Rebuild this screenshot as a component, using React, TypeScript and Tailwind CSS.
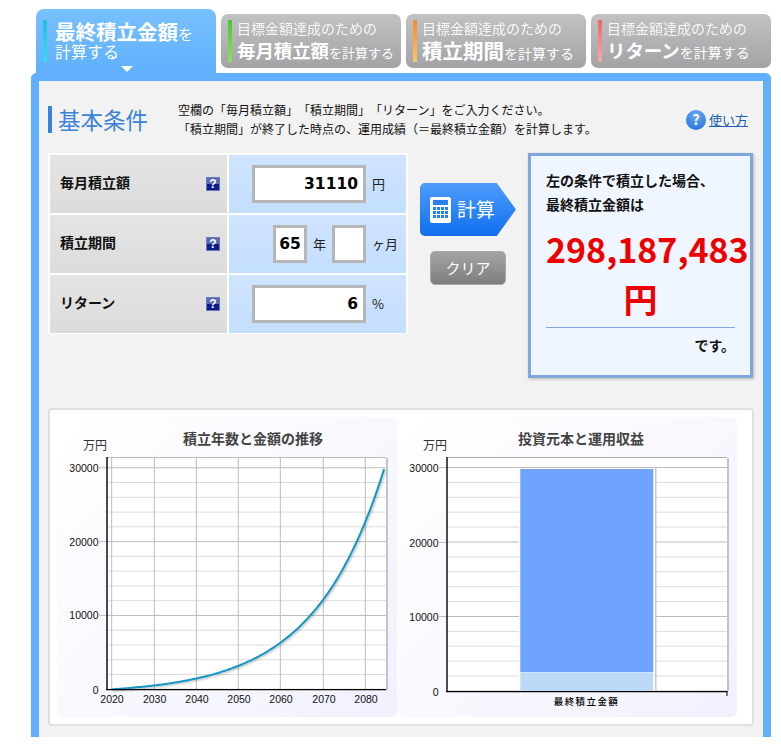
import * as React from "react";

const font = "[font-family:'Noto_Sans_CJK_JP','Noto_Sans',sans-serif] [text-spacing-trim:space-all]";

const principal = 31110;
const ticks = [0, 1, 2, 3, 4, 5, 6, 7, 8, 9, 10, 11, 12, 13, 14, 15];

function valueAt(years: number) {
  return (principal * (Math.pow(1.005, 12 * years) - 1)) / 0.005 / 10000;
}

function GrowthChart() {
  const sx = (t: number) => 54.7 + t * 4.19;
  const sy = (v: number) => 272.3 - (v / 30000) * 221.6;
  let d = "";
  for (let t = 0; t <= 65; t += 0.5) {
    d += (t === 0 ? "M" : "L") + sx(t).toFixed(1) + " " + sy(valueAt(t)).toFixed(1) + " ";
  }
  const minors = ticks.map((i) => 272.3 - i * 14.77);
  const years = [2020, 2030, 2040, 2050, 2060, 2070, 2080];
  const gridX = [54.7, 97.3, 139.3, 181.3, 223.3, 266.3, 308.3];
  const labelX = [55, 97.6, 140, 182, 224, 267, 309];
  return (
    <svg width="340" height="300" className="block">
      <defs>
        <filter id="soft" x="-5%" y="-5%" width="110%" height="110%">
          <feDropShadow dx="1" dy="1" stdDeviation="1" floodColor="#000" floodOpacity="0.3" />
        </filter>
      </defs>
      <text x="196" y="27" textAnchor="middle" fontSize="14" fontWeight="700" fill="#444">積立年数と金額の推移</text>
      <text x="26" y="33" fontSize="12" fill="#333">万円</text>
      <rect x="50" y="40" width="279" height="232" fill="#fff" />
      <rect x="329" y="41" width="2" height="232" fill="#c4c4c8" />
      {minors.map((y, i) => (
        <line key={i} x1="50" x2="329" y1={y} y2={y} stroke={i % 5 === 0 ? "#bcbcbc" : "#dcdcdc"} strokeWidth="1" />
      ))}
      {gridX.map((x) => (
        <line key={x} x1={x} x2={x} y1="40" y2="272" stroke="#bcbcbc" strokeWidth="1" />
      ))}
      <line x1="50" x2="329" y1="40.5" y2="40.5" stroke="#bbb" />
      <path d={d} fill="none" stroke="#1496c4" strokeWidth="2" filter="url(#soft)" />
      {[50.7, 124.6, 198.3].map((y) => (
        <line key={y} x1="42" x2="50" y1={y} y2={y} stroke="#bcbcbc" strokeWidth="1" />
      ))}
      <line x1="50" x2="50" y1="40" y2="273" stroke="#000" strokeWidth="1.4" />
      <line x1="49" x2="329" y1="272.6" y2="272.6" stroke="#000" strokeWidth="1.4" />
      {[30000, 20000, 10000, 0].map((v, i) => (
        <text key={v} x="41.5" y={[55, 129, 202, 277][i]} textAnchor="end" fontSize="10.5" fill="#111" fontFamily="'Liberation Sans',sans-serif">{v}</text>
      ))}
      {years.map((y, i) => (
        <text key={y} x={labelX[i]} y="286" textAnchor="middle" fontSize="10.5" fill="#111" fontFamily="'Liberation Sans',sans-serif">{y}</text>
      ))}
    </svg>
  );
}

function ShareChart() {
  const minors = ticks.map((i) => 274 - i * 14.9);
  return (
    <svg width="339" height="300" className="block">
      <text x="183" y="27" textAnchor="middle" fontSize="14" fontWeight="700" fill="#444">投資元本と運用収益</text>
      <text x="25" y="33" fontSize="12" fill="#333">万円</text>
      <rect x="49" y="40" width="280" height="234" fill="#fff" />
      <rect x="329" y="41" width="2" height="233" fill="#c4c4c8" />
      {minors.map((y, i) => (
        <line key={i} x1="49" x2="329" y1={y} y2={y} stroke={i % 5 === 0 ? "#bcbcbc" : "#dcdcdc"} strokeWidth="1" />
      ))}
      {[50.5, 125.5, 199.5].map((y) => (
        <line key={y} x1="41" x2="49" y1={y} y2={y} stroke="#bcbcbc" strokeWidth="1" />
      ))}
      <line x1="49" x2="329" y1="40.5" y2="40.5" stroke="#aaa" />
      <rect x="121" y="51" width="136" height="223" fill="#fff" />
      <rect x="257" y="51" width="1.5" height="223" fill="#c9c9cc" />
      <rect x="122.3" y="52" width="133" height="203.3" fill="#6ea3ff" />
      <rect x="122.3" y="256" width="133" height="18" fill="#bdd9f8" />
      <line x1="49" x2="49" y1="40" y2="275" stroke="#000" strokeWidth="1.4" />
      <line x1="48" x2="329.5" y1="274.6" y2="274.6" stroke="#000" strokeWidth="1.4" />
      <line x1="329" x2="329" y1="274" y2="279" stroke="#000" strokeWidth="1" />
      {[30000, 20000, 10000, 0].map((v, i) => (
        <text key={v} x="40.5" y={[55, 130, 204, 279][i]} textAnchor="end" fontSize="10.5" fill="#111" fontFamily="'Liberation Sans',sans-serif">{v}</text>
      ))}
      <text x="188.5" y="288" textAnchor="middle" fontSize="9.5" fontWeight="500" letterSpacing="1.4" fill="#000">最終積立金額</text>
    </svg>
  );
}

function QuestionMark() {
  return (
    <span className="relative flex h-[14px] w-[14px] items-center justify-center border border-[#6a78b8] bg-[linear-gradient(#5c6cb4_50%,#101c8c_50%)] text-[12px] leading-none font-bold text-white [font-family:'Liberation_Sans',sans-serif]">
      ?
    </span>
  );
}

function Tab({ bar, big, bigSize, restSize }: { bar: string; big: string; bigSize: string; restSize: string }) {
  return (
    <div className="mt-[5px] flex h-[54px] w-[180px] items-center rounded-[7px] bg-[linear-gradient(#c2c2c4,#a3a3a6)] pl-[7px] text-white">
      <div className={`h-[42px] w-[4px] shrink-0 ${bar}`} />
      <div className="ml-[5px] whitespace-nowrap">
        <div className="text-[14px] leading-[20px] opacity-90">目標金額達成のための</div>
        <div className={`leading-[24px] ${restSize}`}>
          <span className={`font-bold ${bigSize}`}>{big}</span>を計算する
        </div>
      </div>
    </div>
  );
}

function LabelCell({ children }: { children: React.ReactNode }) {
  return (
    <div className="flex items-center justify-between bg-[linear-gradient(#e4e4e4,#dcdcdc)] pr-[7px] pl-[10px] text-[14px] font-bold text-[#111]">
      <span className="-mt-[3px]">{children}</span>
      <QuestionMark />
    </div>
  );
}

function NumberBox({ value, className }: { value: string; className: string }) {
  return (
    <input
      readOnly
      value={value}
      className={`h-[38px] border-[3px] border-[#b6b6b6] bg-white text-[15.5px] font-bold text-black outline-none [font-family:'DejaVu_Sans',sans-serif] ${className}`}
    />
  );
}

export default function App() {
  return (
    <div className={`h-[746px] w-[781px] overflow-hidden bg-white ${font}`}>
      <div className="flex gap-[5px] pt-[9px] pl-[36px]">
        <div className="flex h-[64px] w-[180px] flex-col rounded-t-[8px] bg-[linear-gradient(#78c0fe,#5fb0fc)] pt-[11px] pl-[7px] text-white">
          <div className="flex h-[42px]">
            <div className="h-[42px] w-[4px] bg-[linear-gradient(#22bde6,#3fdcec)]" />
            <div className="mt-[1px] ml-[8px] whitespace-nowrap">
              <div className="text-[15px] leading-[20px]">
                <span className="text-[20.5px] font-bold">最終積立金額</span>を
              </div>
              <div className="-mt-[3px] text-[16px] leading-[20px]">計算する</div>
            </div>
          </div>
          <div className="mt-[4px] ml-[78px] h-0 w-0 border-x-[6px] border-t-[6px] border-x-transparent border-t-white" />
        </div>
        <Tab bar="bg-[linear-gradient(#4fc334,#8ce060)]" big="毎月積立額" bigSize="text-[18.4px]" restSize="text-[13px]" />
        <Tab bar="bg-[linear-gradient(#f58a2e,#fbc46a)]" big="積立期間" bigSize="text-[20.5px]" restSize="text-[14px]" />
        <Tab bar="bg-[linear-gradient(#ec6a6a,#f6a8a8)]" big="リターン" bigSize="text-[18.4px]" restSize="text-[14px]" />
      </div>

      <div className="ml-[31px] h-[664px] w-[740px] rounded-t-[6px] border-x-[8px] border-t-[8px] border-[#60b0fe] bg-[#f2f2f2] pt-[25px]">
        <div className="ml-[9px] flex h-[27px] w-[700px] items-center">
          <div className="h-[27px] w-[4px] bg-[#3583de]" />
          <h2 className="ml-[6px] w-[120px] text-[22.5px] leading-[27px] text-[#3b84d8]">基本条件</h2>
          <div className="-mt-[1px] text-[12px] leading-[19px] text-[#111]">
            <p className="whitespace-nowrap">空欄の「毎月積立額」「積立期間」「リターン」をご入力ください。</p>
            <p className="whitespace-nowrap">「積立期間」が終了した時点の、運用成績（＝最終積立金額）を計算します。</p>
          </div>
          <div className="ml-auto flex items-center gap-[3px]">
            <span className="flex h-[20px] w-[20px] items-center justify-center rounded-full bg-[radial-gradient(circle_at_50%_25%,#6aa8f2,#1f6fdc)] text-[14px] font-bold text-white">?</span>
            <a href="#" className="text-[13px] text-[#1a5fb4] underline">使い方</a>
          </div>
        </div>

        <div className="mt-[20px] flex">
          <div className="ml-[9px] grid h-[181px] w-[360px] grid-cols-2 grid-rows-3 gap-[2px] bg-white p-[2px] pb-[1px]">
            <LabelCell>毎月積立額</LabelCell>
            <div className="flex items-center bg-[linear-gradient(#cfe4ff,#c4deff)] pr-[2px]">
              <NumberBox value="31110" className="ml-[23px] w-[114px] px-[5px] text-right" />
              <span className="ml-[6px] text-[13px] text-[#222]">円</span>
            </div>
            <LabelCell>積立期間</LabelCell>
            <div className="flex items-center bg-[linear-gradient(#cfe4ff,#c4deff)]">
              <NumberBox value="65" className="ml-[44px] w-[34px] text-center" />
              <span className="ml-[6px] text-[13px] text-[#222]">年</span>
              <NumberBox value="" className="ml-[6px] w-[34px] text-center" />
              <span className="ml-[6px] text-[13px] whitespace-nowrap text-[#222]">ヶ月</span>
            </div>
            <LabelCell>リターン</LabelCell>
            <div className="flex items-center bg-[linear-gradient(#cfe4ff,#c4deff)]">
              <NumberBox value="6" className="ml-[23px] w-[114px] px-[5px] text-right" />
              <span className="ml-[6px] text-[13px] text-[#222]">%</span>
            </div>
          </div>

          <div className="ml-[12px] flex w-[108px] flex-col pt-[30px]">
            <div className="flex h-[53px] w-[96px] items-center rounded-[5px] bg-[linear-gradient(#4e9cfb,#0f6fee)] pl-[10px] text-[19px] text-white [clip-path:polygon(0_0,80%_0,100%_50%,80%_100%,0_100%)]">
              <svg width="21" height="26" viewBox="0 0 21 26">
                <rect width="21" height="26" rx="2" fill="#fff" />
                <rect x="3" y="3" width="15" height="5" fill="#2a80f0" />
                {[10, 14, 18].map((y) =>
                  [3, 7, 11, 15].map((x) => <rect key={`${x}-${y}`} x={x} y={y} width="3" height="3" fill="#2a80f0" />),
                )}
              </svg>
              <span className="ml-[6px]">計算</span>
            </div>
            <button className="mt-[15px] ml-[10px] h-[34px] w-[76px] rounded-[5px] border border-[#a8a8a8] bg-[linear-gradient(#a4a4a4,#7e7e7e)] text-[15px] text-white">
              クリア
            </button>
          </div>

          <div className="h-[225px] w-[225px] border-[3px] border-[#7ea8dc] bg-[#f0f6ff] px-[15px] pt-[12px] shadow-[1px_1px_3px_rgba(0,0,0,0.25)]">
            <p className="text-[14px] leading-[24px] font-bold text-[#111]">
              左の条件で積立した場合、
              <br />
              最終積立金額は
            </p>
            <p className="mt-[8px] text-center text-[34px] leading-[50px] font-bold whitespace-nowrap text-[#ee0000]">
              298,187,483
              <br />
              円
            </p>
            <div className="mt-[3px] border-t border-[#7ea8dc]" />
            <p className="mt-[7px] text-right text-[14px] font-bold text-[#111]">です。</p>
          </div>
        </div>

        <div className="mt-[30px] ml-[9px] flex h-[318px] w-[706px] rounded-[4px] border-2 border-[#e0e0e0] bg-white p-[7px]">
          <div className="h-[300px] w-[340px] rounded-[5px] bg-[linear-gradient(135deg,#ffffff,#f1f1fe)]">
            <GrowthChart />
          </div>
          <div className="ml-[1px] h-[300px] w-[339px] rounded-[5px] bg-[linear-gradient(135deg,#ffffff,#f1f1fe)]">
            <ShareChart />
          </div>
        </div>
      </div>
    </div>
  );
}
